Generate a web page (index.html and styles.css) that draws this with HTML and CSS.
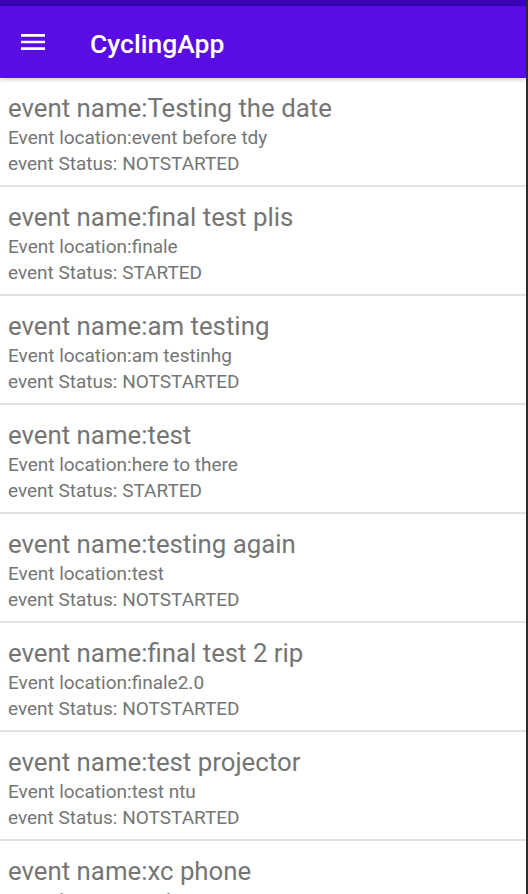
FILE: index.html
```html
<!DOCTYPE html>
<html>
<head>
<meta charset="utf-8">
<link rel="stylesheet" href="styles.css">
</head>
<body>
<div class="screen">
  <div class="status-bar"></div>
  <header class="app-bar">
    <svg class="menu-icon" viewBox="0 0 24 24" width="32" height="32"><path fill="#fff" d="M3 18h18v-2H3v2zm0-5h18v-2H3v2zm0-7v2h18V6H3z"/></svg>
    <span class="app-title">CyclingApp</span>
  </header>
  <main class="list">
    <div class="item">
      <div class="name">event name:Testing the date</div>
      <div class="sub">Event location:event before tdy</div>
      <div class="sub">event Status: NOTSTARTED</div>
    </div>
    <div class="item">
      <div class="name">event name:final test plis</div>
      <div class="sub">Event location:finale</div>
      <div class="sub">event Status: STARTED</div>
    </div>
    <div class="item">
      <div class="name">event name:am testing</div>
      <div class="sub">Event location:am testinhg</div>
      <div class="sub">event Status: NOTSTARTED</div>
    </div>
    <div class="item">
      <div class="name">event name:test</div>
      <div class="sub">Event location:here to there</div>
      <div class="sub">event Status: STARTED</div>
    </div>
    <div class="item">
      <div class="name">event name:testing again</div>
      <div class="sub">Event location:test</div>
      <div class="sub">event Status: NOTSTARTED</div>
    </div>
    <div class="item">
      <div class="name">event name:final test 2 rip</div>
      <div class="sub">Event location:finale2.0</div>
      <div class="sub">event Status: NOTSTARTED</div>
    </div>
    <div class="item">
      <div class="name">event name:test projector</div>
      <div class="sub">Event location:test ntu</div>
      <div class="sub">event Status: NOTSTARTED</div>
    </div>
    <div class="item">
      <div class="name">event name:xc phone</div>
      <div class="sub">Event location:xc phone</div>
      <div class="sub">event Status: NOTSTARTED</div>
    </div>
  </main>
</div>
</body>
</html>
```

FILE: styles.css
```css
html, body {
  margin: 0;
  padding: 0;
  background: #ffffff;
}
.screen {
  width: 526px;
  height: 894px;
  overflow: hidden;
  border-right: 2px solid #2b2b2b;
  font-family: Roboto, "Noto Sans", sans-serif;
  display: flex;
  flex-direction: column;
  background: #fff;
}
.status-bar {
  height: 6px;
  background: #3700b3;
  flex: none;
}
.app-bar {
  height: 72px;
  flex: none;
  background: #5a0de2;
  display: flex;
  align-items: center;
  box-shadow: 0 2px 4px rgba(0,0,0,0.18);
  position: relative;
  z-index: 1;
}
.menu-icon {
  margin-left: 17px;
  display: block;
}
.app-title {
  margin-left: 41px;
  margin-top: 3px;
  color: #fff;
  font-size: 26.5px;
  font-weight: 500;
}
.list {
  flex: none;
}
.item {
  padding: 14px 8px 8px 8px;
  border-bottom: 2px solid #e2e2e2;
  color: #757575;
}
.name {
  font-size: 25.8px;
  line-height: 33px;
  white-space: nowrap;
}
.sub {
  font-size: 19px;
  line-height: 26px;
  white-space: nowrap;
}
```
